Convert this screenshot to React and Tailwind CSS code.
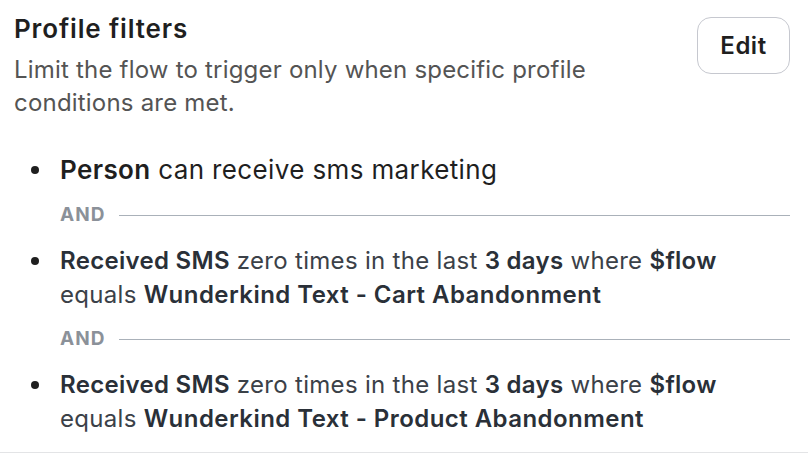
function AndRow({ className }) {
  return (
    <li className={"flex items-center ml-[30px] h-[34px] " + className}>
      <span className="text-[19px] leading-[34px] font-bold tracking-[1px] text-[#8b9199]">AND</span>
      <span className="ml-[14px] flex-1 h-px bg-[#aab1b9]" />
    </li>
  );
}

function Bullet({ h }) {
  return (
    <span className={"w-[16px] flex items-center shrink-0 " + h}>
      <span className="ml-[1px] w-[8px] h-[8px] rounded-full bg-[#1f1f1f]" />
    </span>
  );
}

function SmsItem({ name, className }) {
  const b = "font-semibold text-[#2a3038]";
  return (
    <li className={"flex items-start " + className}>
      <Bullet h="h-[34px]" />
      <span className="ml-[14px] text-[24px] leading-[34px] tracking-[0.3px] text-[#3b4148]">
        <b className={b}>Received SMS</b> zero times in the last <b className={b}>3 days</b> where{" "}
        <b className={b}>$flow</b>
        <br />
        equals <b className={b + " tracking-[0.45px]"}>{name}</b>
      </span>
    </li>
  );
}

export default function App() {
  const font = { fontFamily: "Inter, 'Noto Sans', sans-serif" };
  return (
    <div className="w-[808px] h-[462px] bg-white overflow-hidden" style={font}>
      <div className="border-b border-[#e3e4e6] pb-[16px]">
        <div className="flex justify-between pl-[14px] pr-[18px] pt-[13px]">
          <div>
            <h2 className="text-[26px] leading-[32px] font-semibold tracking-[0.85px] text-[#1f1f1f]">Profile filters</h2>
            <p className="mt-[8px] text-[24px] leading-[33px] tracking-[0.2px] text-[#545454] w-[620px]">
              Limit the flow to trigger only when specific profile conditions are met.
            </p>
          </div>
          <button className="mt-[4px] h-[57px] w-[93px] rounded-[14px] border border-[#c6c8cf] text-[24px] font-semibold tracking-[0.5px] text-[#1f1f1f]">
            Edit
          </button>
        </div>
        <ul className="mt-[33px] pl-[30px] pr-[18px]">
          <li className="flex items-start">
            <Bullet h="h-[36px]" />
            <span className="ml-[14px] text-[26px] leading-[36px] tracking-[0.37px] text-[#1f1f1f]">
              <b className="font-semibold">Person</b> can receive sms marketing
            </span>
          </li>
          <AndRow className="mt-[10px]" />
          <SmsItem className="mt-[12px]" name="Wunderkind Text - Cart Abandonment" />
          <AndRow className="mt-[10px]" />
          <SmsItem className="mt-[12px]" name="Wunderkind Text - Product Abandonment" />
        </ul>
      </div>
    </div>
  );
}
